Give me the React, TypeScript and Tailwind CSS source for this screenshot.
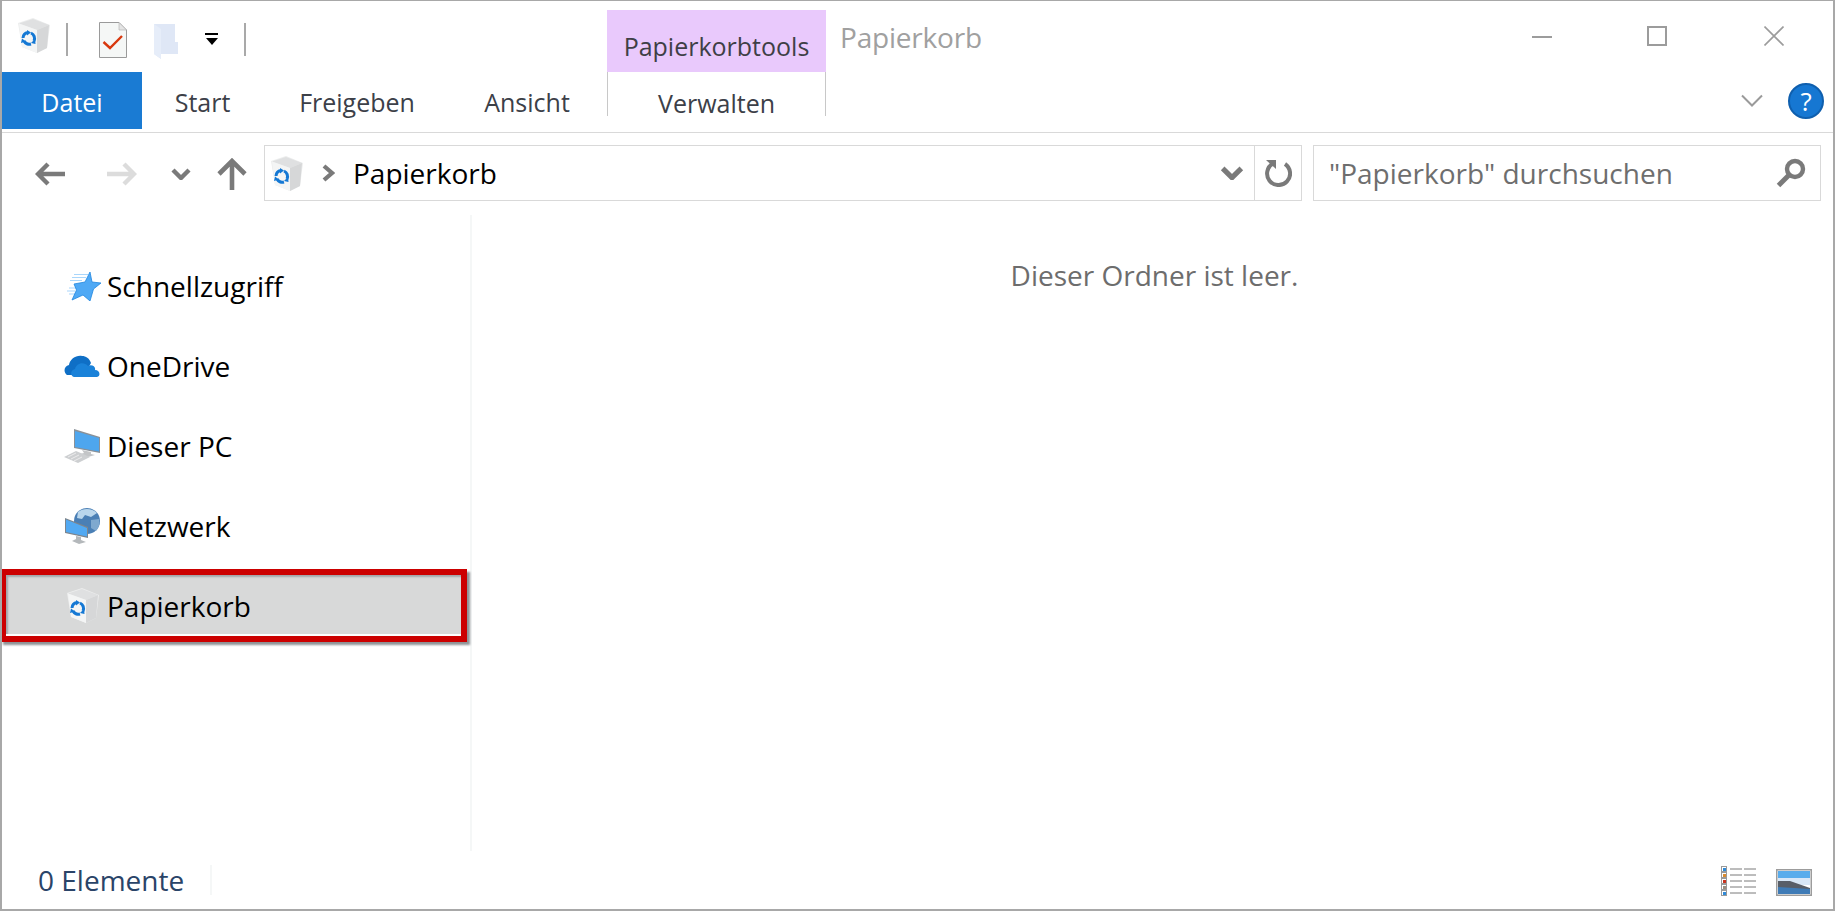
const FONT = "font-['Open_Sans',sans-serif]";

function RecycleBin({ className }: { className?: string }) {
  return (
    <svg className={className} viewBox="0 0 32 35" aria-hidden>
      <path d="M0 5 L15 0 L32 7 L29 30 L19 35 L4 29 Z" fill="#eceded" />
      <path d="M1 5.5 L15 1 L31 7 L19 12 Z" fill="#dfe0e1" />
      <path d="M19 12 L31 7 L29 30 L19 35 Z" fill="#d6d7d8" />
      <path d="M1 5.5 L19 12 L19 35 L4 29 Z" fill="#f4f5f5" />
      <g fill="none" stroke="#1478d4" strokeWidth="3">
        <path d="M5 20 A6 6 0 0 1 10 14.5" />
        <path d="M13 15 A6 6 0 0 1 16 23" />
        <path d="M13 26 A6 6 0 0 1 6 23" />
      </g>
      <path d="M9 12 L13 14.5 L9 17.5 Z M17 21 L17.5 26 L13 25 Z M3 25 L4 20.5 L8 23.5 Z" fill="#1478d4" />
    </svg>
  );
}

function Star({ className }: { className?: string }) {
  return (
    <svg className={className} viewBox="0 0 34 29" aria-hidden>
      <g stroke="#a9d6fb" strokeWidth="1.2">
        <path d="M7 2.5 H21 M5 5.5 H19 M3 8.5 H15 M2 16 H9 M0 19 H8 M2 22 H8" />
      </g>
      <path
        d="M23 0 L25 10 L34 11 L26.5 17 L23 29 L16 23 L5 28 L9.5 18 L7 12 L18 10 Z"
        fill="#4fa9f5"
        stroke="#1f86e0"
        strokeWidth="0.8"
      />
    </svg>
  );
}

function Cloud({ className }: { className?: string }) {
  return (
    <svg className={className} viewBox="0 0 36 22" aria-hidden>
      <path d="M3 20 C-1 17 0 11 5 10 C6 4 12 0 18 1 C22 1 25 3 27 8 L20 20 Z" fill="#0f6fc6" />
      <path d="M10 22 C6 21 6 15 11 14 C12 8 20 6 24 11 C28 9 32 12 31 15 C36 15 37 21 33 22 Z" fill="#1a82d9" />
    </svg>
  );
}

function Computer({ className }: { className?: string }) {
  return (
    <svg className={className} viewBox="0 0 36 34" aria-hidden>
      <path d="M10 0 L36 8 L36 24 L10 19 Z" fill="#8a9198" />
      <path d="M11 2 L35 9 L35 22.5 L11 18 Z" fill="#4ea6ee" />
      <path d="M18 21 L27 23 L27 25 L31 26 L24 28 L16 25 L20 24 Z" fill="#c3c5c7" />
      <path d="M0 28 L12 22 L26 28 L14 34 Z" fill="#cdcfd1" />
      <g stroke="#f3f3f3" strokeWidth="0.8">
        <path d="M4 28 L12 24 M7 30 L15 26 M10 32 L18 28" />
      </g>
    </svg>
  );
}

function Network({ className }: { className?: string }) {
  return (
    <svg className={className} viewBox="0 0 36 36" aria-hidden>
      <circle cx="23" cy="13" r="13" fill="#4a7fb5" />
      <path d="M14 4 C19 0 28 0 33 5 L27 9 L21 7 L18 11 L13 10 Z" fill="#b9d6ec" />
      <path d="M27 12 L35 11 C36 16 35 20 32 23 L27 20 Z" fill="#7fa9cf" />
      <path d="M1 10 L24 19 V30 L1 25 Z" fill="#7d858d" />
      <path d="M2 11.5 L23 20 V28.5 L2 24 Z" fill="#52a9f2" />
      <path d="M12 28 L17 29 L17 32 L22 34 L15 36 L8 33 L12 31 Z" fill="#b4b8bb" />
    </svg>
  );
}

function CheckDoc({ className }: { className?: string }) {
  return (
    <svg className={className} viewBox="0 0 28 36" aria-hidden>
      <path d="M0.5 0.5 H20 L27.5 8 V35.5 H0.5 Z" fill="#f5f7f6" stroke="#9a9a9a" />
      <path d="M20 0.5 V8 H27.5 Z" fill="#e4e4e4" stroke="#b0b0b0" strokeWidth="0.6" />
      <path d="M4.5 20 L11 26 L23 14" fill="none" stroke="#d8380e" strokeWidth="2.4" />
    </svg>
  );
}

function FolderGhost({ className }: { className?: string }) {
  return (
    <svg className={className} viewBox="0 0 24 36" aria-hidden>
      <path d="M0 0 H21 V18 H24 V30 H7 V35 L0 30 Z" fill="#dfe7f6" />
      <path d="M0 0 L7 5 V35 L0 30 Z" fill="#e6edf9" />
    </svg>
  );
}

function ArrowLeft({ className, color }: { className?: string; color: string }) {
  return (
    <svg className={className} viewBox="0 0 30 24" aria-hidden>
      <path d="M30 12 H4 M13 2 L3 12 L13 22" fill="none" stroke={color} strokeWidth="4.4" />
    </svg>
  );
}

function ArrowRight({ className, color }: { className?: string; color: string }) {
  return (
    <svg className={className} viewBox="0 0 30 24" aria-hidden>
      <path d="M0 12 H26 M17 2 L27 12 L17 22" fill="none" stroke={color} strokeWidth="4.4" />
    </svg>
  );
}

function ArrowUp({ className }: { className?: string }) {
  return (
    <svg className={className} viewBox="0 0 30 32" aria-hidden>
      <path d="M15 32 V4 M2 16 L15 3 L28 16" fill="none" stroke="#7a7a7a" strokeWidth="4.6" />
    </svg>
  );
}

function ChevronDown({ className, color = "#7a7a7a", width = 4.4 }: { className?: string; color?: string; width?: number }) {
  return (
    <svg className={className} viewBox="0 0 20 12" aria-hidden>
      <path d="M2 2 L10 10 L18 2" fill="none" stroke={color} strokeWidth={width} />
    </svg>
  );
}

function Refresh({ className }: { className?: string }) {
  return (
    <svg className={className} viewBox="0 0 28 28" aria-hidden>
      <path d="M9 4.5 A11.5 11.5 0 1 0 21 5" fill="none" stroke="#7a7a7a" strokeWidth="4" />
      <path d="M2 1 H12 V10 Z" fill="#7a7a7a" />
    </svg>
  );
}

function Magnifier({ className }: { className?: string }) {
  return (
    <svg className={className} viewBox="0 0 30 30" aria-hidden>
      <circle cx="19" cy="11" r="8" fill="none" stroke="#7a7a7a" strokeWidth="4.4" />
      <path d="M12.5 17.5 L2.5 27.5" stroke="#7a7a7a" strokeWidth="5" />
    </svg>
  );
}

function DetailsView({ className }: { className?: string }) {
  const rows = ["#2f8ad8", "#d98a2e", "#c8321e", "#9c8f80", "#2f8ad8"];
  return (
    <svg className={className} viewBox="0 0 36 30" aria-hidden>
      {rows.map((c, i) => (
        <g key={i}>
          <rect x="0.5" y={0.5 + i * 6} width="5" height="5" fill="#fff" stroke="#9a9a9a" />
          <rect x="2" y={2 + i * 6} width="3" height="3" fill={c} />
          <path d={`M9 ${3 + i * 6} H21 M23 ${3 + i * 6} H35`} stroke="#7a7a7a" strokeWidth="1" />
        </g>
      ))}
    </svg>
  );
}

function PreviewView({ className }: { className?: string }) {
  return (
    <svg className={className} viewBox="0 0 36 27" aria-hidden>
      <rect x="0.75" y="0.75" width="34.5" height="25.5" fill="#fff" stroke="#9c9c9c" strokeWidth="1.5" />
      <rect x="2" y="2" width="32" height="7" fill="#58acec" />
      <rect x="2" y="9" width="32" height="7" fill="#d8e7f7" />
      <path d="M2 12 L14 12 L34 19 V24.5 H2 Z" fill="#585e68" />
      <path d="M2 18 L34 20 V25 H2 Z" fill="#3f7bb6" />
    </svg>
  );
}

const TABS = [
  { label: "Start", width: "w-[121px]" },
  { label: "Freigeben", width: "w-[188px]" },
  { label: "Ansicht", width: "w-[152px]" },
];

const NAV_ITEMS = [
  { label: "Schnellzugriff", icon: <Star className="ml-[5px] h-[29px] w-[34px]" /> },
  { label: "OneDrive", icon: <Cloud className="ml-[2px] h-[22px] w-[36px]" /> },
  { label: "Dieser PC", icon: <Computer className="ml-[2px] h-[34px] w-[36px]" /> },
  { label: "Netzwerk", icon: <Network className="ml-[2px] h-[36px] w-[36px]" /> },
];

export default function App() {
  return (
    <div className={`flex h-[911px] w-[1835px] flex-col overflow-hidden border-t border-r-2 border-b-2 border-l-2 border-[#a8a8a8] bg-white ${FONT}`}>
      {/* title bar */}
      <div className="flex h-[71px] shrink-0">
        <div className="flex w-[605px] shrink-0 items-start pt-[17px]">
          <RecycleBin className="ml-[16px] h-[35px] w-[32px]" />
          <div className="mt-[5px] ml-[16px] h-[33px] w-[2px] bg-[#a9a9a9]" />
          <CheckDoc className="mt-[4px] ml-[31px] h-[36px] w-[28px]" />
          <FolderGhost className="mt-[6px] ml-[27px] h-[36px] w-[24px]" />
          <div className="mt-[15px] ml-[27px] flex flex-col items-center">
            <div className="h-[2px] w-[13px] bg-black" />
            <div className="mt-[3px] h-0 w-0 border-x-[6px] border-t-[7px] border-x-transparent border-t-black" />
          </div>
          <div className="mt-[5px] ml-[26px] h-[33px] w-[2px] bg-[#a9a9a9]" />
        </div>
        <div className="mt-[9px] flex h-[62px] w-[219px] shrink-0 items-end justify-center bg-[#e9c9fc] pb-[8px] text-[25px] leading-[36px] text-[#3f3f46]">
          Papierkorbtools
        </div>
        <div className="ml-[14px] pt-[17px] text-[28px] leading-[38px] tracking-[-0.2px] text-[#a0a0a0]">Papierkorb</div>
        <div className="ml-auto flex items-start pr-[49px]">
          <div className="mt-[35px] h-[2px] w-[20px] bg-[#9c9c9c]" />
          <div className="mt-[25px] ml-[95px] h-[20px] w-[20px] border-2 border-[#9c9c9c]" />
          <svg className="mt-[25px] ml-[97px] h-[20px] w-[20px]" viewBox="0 0 20 20" aria-hidden>
            <path d="M0.5 0.5 L19.5 19.5 M19.5 0.5 L0.5 19.5" stroke="#9c9c9c" strokeWidth="1.6" />
          </svg>
        </div>
      </div>

      {/* ribbon tabs */}
      <div className="flex h-[61px] shrink-0 items-start border-b border-[#d9d9d9]">
        <div className="flex h-[57px] w-[140px] shrink-0 items-center justify-center bg-[#1a7bd3] pt-[4px] text-[25px] text-white">
          Datei
        </div>
        {TABS.map((tab) => (
          <div key={tab.label} className={`flex h-[57px] ${tab.width} shrink-0 items-center justify-center pt-[4px] text-[25px] text-[#3c4048]`}>
            {tab.label}
          </div>
        ))}
        <div className="ml-[4px] flex h-[44px] w-[219px] shrink-0 items-start justify-center border-x border-[#c8c8c8] pt-[15px] text-[25px] leading-[33px] text-[#3c4048]">
          Verwalten
        </div>
        <ChevronDown className="mt-[21px] ml-auto h-[15px] w-[28px]" color="#9a9a9a" width={1.6} />
        <div className="mt-[11px] mr-[9px] ml-[22px] flex h-[36px] w-[36px] items-center justify-center rounded-full border-2 border-[#0f5fae] bg-[#1677d2] text-[26px] leading-none text-white">
          ?
        </div>
      </div>

      {/* address bar */}
      <div className="flex h-[68px] shrink-0 items-center pt-[12px]">
        <ArrowLeft className="mt-[2px] ml-[33px] h-[24px] w-[30px]" color="#7a7a7a" />
        <ArrowRight className="mt-[2px] ml-[42px] h-[24px] w-[30px]" color="#dcdcdc" />
        <ChevronDown className="mt-[2px] ml-[34px] h-[12px] w-[20px]" />
        <ArrowUp className="mt-[2px] ml-[26px] h-[32px] w-[30px]" />
        <div className="ml-[17px] flex h-[56px] w-[1038px] shrink-0 items-center border border-[#d9d9d9]">
          <RecycleBin className="ml-[6px] h-[35px] w-[32px]" />
          <svg className="ml-[19px] h-[18px] w-[13px]" viewBox="0 0 13 18" aria-hidden>
            <path d="M2 2 L10 9 L2 16" fill="none" stroke="#7a7a7a" strokeWidth="4.2" />
          </svg>
          <span className="ml-[18px] text-[28px] text-black">Papierkorb</span>
          <ChevronDown className="mr-[10px] ml-auto h-[14px] w-[24px]" />
          <div className="flex h-full w-[47px] items-center justify-center border-l border-[#d9d9d9]">
            <Refresh className="h-[28px] w-[28px]" />
          </div>
        </div>
        <div className="ml-[11px] flex h-[56px] w-[508px] shrink-0 items-center border border-[#d9d9d9] pr-[14px] pl-[15px]">
          <span className="text-[28px] text-[#6e6e6e]">"Papierkorb" durchsuchen</span>
          <Magnifier className="ml-auto h-[30px] w-[30px]" />
        </div>
      </div>

      {/* main */}
      <div className="mt-[14px] flex min-h-0 flex-1">
        <div className="flex w-[470px] shrink-0 flex-col border-r-2 border-[#f5f7f7] pt-[31px]">
          {NAV_ITEMS.map((item) => (
            <div key={item.label} className="flex h-[80px] shrink-0 items-center">
              <div className="ml-[60px] flex w-[45px] justify-start">{item.icon}</div>
              <span className="text-[28px] text-black">{item.label}</span>
            </div>
          ))}
          <div className="mt-[3px] -ml-[2px] flex h-[73px] w-[467px] shrink-0 items-center border-[6px] border-[#cc0000] bg-[#d8d9d9] shadow-[inset_0_-2px_0_#ffffff,inset_2px_2px_2px_#a2a6a9,3px_3px_2px_#8f9396]">
            <RecycleBin className="ml-[61px] h-[35px] w-[32px]" />
            <span className="ml-[8px] text-[28px] text-black">Papierkorb</span>
          </div>
        </div>
        <div className="flex flex-1 justify-center pt-[40px] pl-[4px]">
          <span className="h-[40px] text-[28px] leading-[40px] text-[#6d6d6d]">Dieser Ordner ist leer.</span>
        </div>
      </div>

      {/* status bar */}
      <div className="flex h-[58px] shrink-0 items-center">
        <div className="ml-[36px] w-[174px] border-r-2 border-[#f5f7f7] text-[28px] leading-[30px] text-[#2a4468]">0 Elemente</div>
        <DetailsView className="mt-[2px] ml-auto h-[30px] w-[36px]" />
        <PreviewView className="mt-[4px] mr-[21px] ml-[19px] h-[27px] w-[36px]" />
      </div>
    </div>
  );
}
